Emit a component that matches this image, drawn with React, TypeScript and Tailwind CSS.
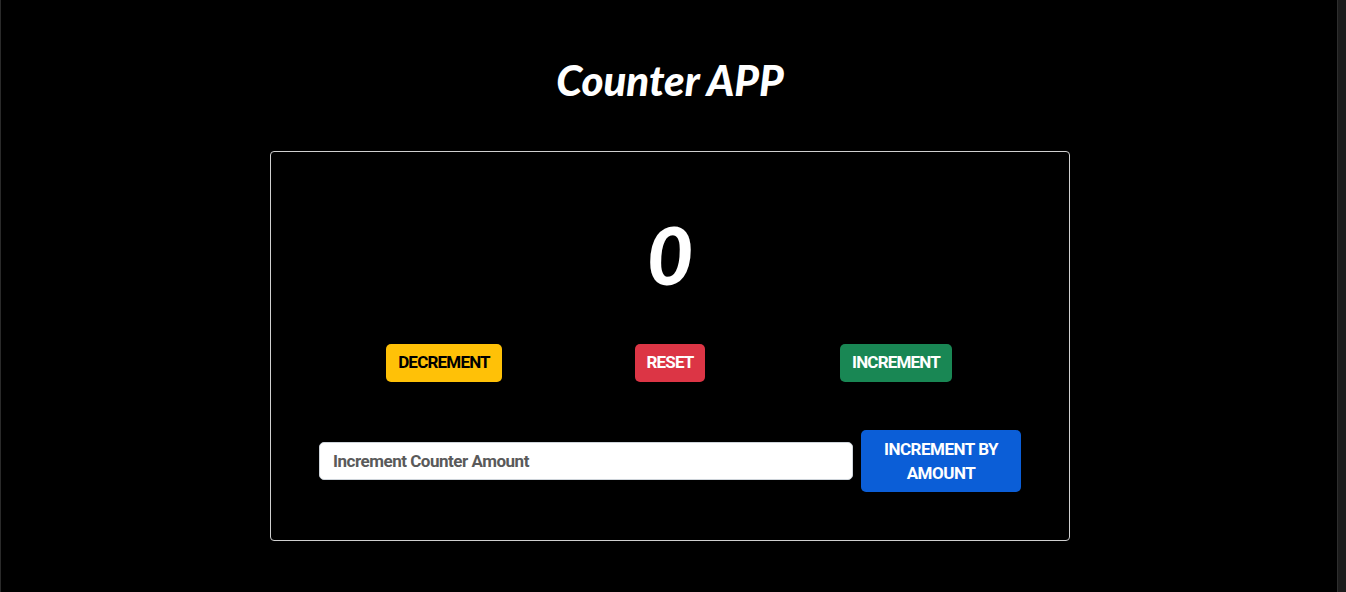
import { useState } from 'react';

const display = { fontFamily: '"Roboto", "Liberation Sans", sans-serif' };
const heading = { fontFamily: '"Lato", "Noto Sans", sans-serif' };

export default function App() {
  const [count, setCount] = useState(0);
  const [amount, setAmount] = useState('');

  return (
    <div className="flex min-h-[592px] bg-black text-white">
      <div className="w-px shrink-0 bg-[#2a2a2a]" />
      <main className="flex flex-1 flex-col items-center pl-[2px]">
        <h1 className="mt-[56px] text-[42px] leading-[48px] font-black italic" style={heading}>
          Counter APP
        </h1>

        <section className="mt-[47px] flex w-[800px] flex-col rounded border border-[#d0d0d0] px-12 pb-12">
          <div className="mt-[52px] text-center text-[80px] leading-[100px] font-black italic" style={heading}>
            {count}
          </div>

          <div className="mt-[40px] grid grid-cols-3 px-3 tracking-[-0.05em]" style={display}>
            <div className="flex justify-center">
              <button
                onClick={() => setCount(c => c - 1)}
                className="h-[38px] rounded-[5px] bg-[#ffc107] px-[12px] text-[17px] font-bold text-black"
              >
                DECREMENT
              </button>
            </div>
            <div className="flex justify-center">
              <button
                onClick={() => setCount(0)}
                className="h-[38px] rounded-[5px] bg-[#dc3545] px-[11px] text-[17px] font-bold"
              >
                RESET
              </button>
            </div>
            <div className="flex justify-center">
              <button
                onClick={() => setCount(c => c + 1)}
                className="h-[38px] rounded-[5px] bg-[#198754] px-[12px] text-[17px] font-bold"
              >
                INCREMENT
              </button>
            </div>
          </div>

          <div className="mt-[48px] flex items-center gap-2 tracking-[-0.03em]" style={display}>
            <input
              value={amount}
              onChange={e => setAmount(e.target.value)}
              placeholder="Increment Counter Amount"
              className="h-[38px] flex-1 rounded-[5px] border border-[#ced4da] bg-white px-[13px] text-[17px] font-bold text-[#212529] outline-none placeholder:text-[#5a5a5a]"
            />
            <button
              onClick={() => setCount(c => c + (Number(amount) || 0))}
              className="h-[62px] w-[160px] rounded-[5px] bg-[#0b5ed7] text-[17px] leading-[24px] font-bold"
            >
              INCREMENT BY
              <br />
              AMOUNT
            </button>
          </div>
        </section>
      </main>
      <div className="flex w-[9px] shrink-0 border-l border-[#2e2e2e] bg-[#1c1c1c]" />
    </div>
  );
}
